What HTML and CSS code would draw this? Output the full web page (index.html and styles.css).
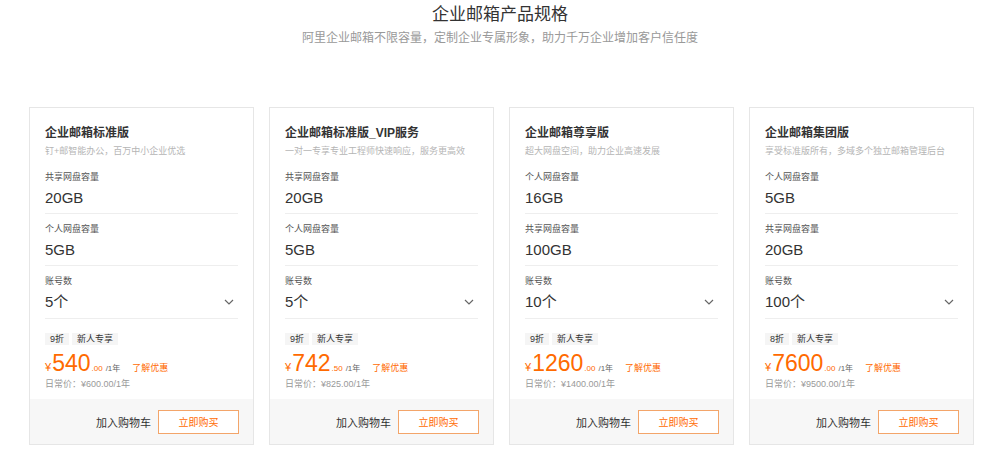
FILE: index.html
```html
<!DOCTYPE html>
<html lang="zh-CN">
<head>
<meta charset="utf-8">
<title>企业邮箱产品规格</title>
<link rel="stylesheet" href="styles.css">
</head>
<body>
<header class="head">
  <h1 class="head-title">企业邮箱产品规格</h1>
  <p class="head-sub">阿里企业邮箱不限容量，定制企业专属形象，助力千万企业增加客户信任度</p>
</header>
<main class="cards">
  <section class="card">
    <div class="card-body">
      <h2 class="card-title">企业邮箱标准版</h2>
      <p class="card-desc">钉+邮智能办公，百万中小企业优选</p>
      <div class="spec"><div class="spec-label">共享网盘容量</div><div class="spec-value">20GB</div></div>
      <div class="spec"><div class="spec-label">个人网盘容量</div><div class="spec-value">5GB</div></div>
      <div class="spec spec-select"><div class="spec-label">账号数</div><div class="spec-row"><span class="spec-value">5个</span><svg class="chev" viewBox="0 0 10 6" width="10" height="6"><path d="M1 1l4 4 4-4" fill="none" stroke="#666" stroke-width="1.2"/></svg></div></div>
      <div class="tags"><span class="tag">9折</span><span class="tag">新人专享</span></div>
      <div class="price"><span class="yen">¥</span><span class="num">540</span><span class="dec">.00</span><span class="unit">/1年</span><a class="promo">了解优惠</a></div>
      <div class="orig">日常价：¥600.00/1年</div>
    </div>
    <div class="card-foot"><span class="cart">加入购物车</span><button class="buy">立即购买</button></div>
  </section>
  <section class="card">
    <div class="card-body">
      <h2 class="card-title">企业邮箱标准版_VIP服务</h2>
      <p class="card-desc">一对一专享专业工程师快速响应，服务更高效</p>
      <div class="spec"><div class="spec-label">共享网盘容量</div><div class="spec-value">20GB</div></div>
      <div class="spec"><div class="spec-label">个人网盘容量</div><div class="spec-value">5GB</div></div>
      <div class="spec spec-select"><div class="spec-label">账号数</div><div class="spec-row"><span class="spec-value">5个</span><svg class="chev" viewBox="0 0 10 6" width="10" height="6"><path d="M1 1l4 4 4-4" fill="none" stroke="#666" stroke-width="1.2"/></svg></div></div>
      <div class="tags"><span class="tag">9折</span><span class="tag">新人专享</span></div>
      <div class="price"><span class="yen">¥</span><span class="num">742</span><span class="dec">.50</span><span class="unit">/1年</span><a class="promo">了解优惠</a></div>
      <div class="orig">日常价：¥825.00/1年</div>
    </div>
    <div class="card-foot"><span class="cart">加入购物车</span><button class="buy">立即购买</button></div>
  </section>
  <section class="card">
    <div class="card-body">
      <h2 class="card-title">企业邮箱尊享版</h2>
      <p class="card-desc">超大网盘空间，助力企业高速发展</p>
      <div class="spec"><div class="spec-label">个人网盘容量</div><div class="spec-value">16GB</div></div>
      <div class="spec"><div class="spec-label">共享网盘容量</div><div class="spec-value">100GB</div></div>
      <div class="spec spec-select"><div class="spec-label">账号数</div><div class="spec-row"><span class="spec-value">10个</span><svg class="chev" viewBox="0 0 10 6" width="10" height="6"><path d="M1 1l4 4 4-4" fill="none" stroke="#666" stroke-width="1.2"/></svg></div></div>
      <div class="tags"><span class="tag">9折</span><span class="tag">新人专享</span></div>
      <div class="price"><span class="yen">¥</span><span class="num">1260</span><span class="dec">.00</span><span class="unit">/1年</span><a class="promo">了解优惠</a></div>
      <div class="orig">日常价：¥1400.00/1年</div>
    </div>
    <div class="card-foot"><span class="cart">加入购物车</span><button class="buy">立即购买</button></div>
  </section>
  <section class="card">
    <div class="card-body">
      <h2 class="card-title">企业邮箱集团版</h2>
      <p class="card-desc">享受标准版所有，多域多个独立邮箱管理后台</p>
      <div class="spec"><div class="spec-label">个人网盘容量</div><div class="spec-value">5GB</div></div>
      <div class="spec"><div class="spec-label">共享网盘容量</div><div class="spec-value">20GB</div></div>
      <div class="spec spec-select"><div class="spec-label">账号数</div><div class="spec-row"><span class="spec-value">100个</span><svg class="chev" viewBox="0 0 10 6" width="10" height="6"><path d="M1 1l4 4 4-4" fill="none" stroke="#666" stroke-width="1.2"/></svg></div></div>
      <div class="tags"><span class="tag">8折</span><span class="tag">新人专享</span></div>
      <div class="price"><span class="yen">¥</span><span class="num">7600</span><span class="dec">.00</span><span class="unit">/1年</span><a class="promo">了解优惠</a></div>
      <div class="orig">日常价：¥9500.00/1年</div>
    </div>
    <div class="card-foot"><span class="cart">加入购物车</span><button class="buy">立即购买</button></div>
  </section>
</main>
</body>
</html>
```

FILE: styles.css
```css
* { box-sizing: border-box; }
html, body { margin: 0; padding: 0; background: #fff; }
body {
  font-family: "Liberation Sans", "Noto Sans CJK SC", Arial, sans-serif;
  color: #333;
}
.head { text-align: center; padding-top: 4px; }
.head-title {
  margin: 0;
  font-size: 17px;
  line-height: 22px;
  font-weight: normal;
  color: #333;
}
.head-sub {
  margin: 4px 0 0;
  font-size: 12px;
  line-height: 16px;
  color: #999;
}
.cards {
  display: flex;
  gap: 15px;
  margin: 61px 0 0;
  padding-left: 29px;
}
.card {
  width: 225px;
  height: 338px;
  border: 1px solid #e6e6e6;
  display: flex;
  flex-direction: column;
  background: #fff;
}
.card-body { padding: 17px 15px 0; }
.card-title {
  margin: 0;
  font-size: 12px;
  line-height: 16px;
  font-weight: bold;
  color: #333;
}
.card-desc {
  margin: 3px 0 4px;
  font-size: 9px;
  line-height: 14px;
  color: #b5b5b5;
  white-space: nowrap;
}
.spec {
  padding: 9px 0 5px;
  border-bottom: 1px solid #eee;
}
.spec-select { padding-bottom: 6px; }
.spec-label {
  font-size: 9px;
  line-height: 12px;
  color: #555;
  margin-bottom: 5px;
}
.spec-value {
  display: block;
  font-size: 15px;
  line-height: 20px;
  color: #333;
}
.spec-row {
  display: flex;
  align-items: center;
  justify-content: space-between;
  padding-right: 4px;
}
.chev { display: block; }
.tags {
  display: flex;
  gap: 3px;
  margin-top: 14px;
}
.tag {
  background: #f5f5f5;
  font-size: 9px;
  line-height: 12px;
  padding: 0 5px;
  color: #333;
}
.price {
  display: flex;
  align-items: baseline;
  margin-top: 5px;
  height: 26px;
  line-height: 26px;
  color: #ff6a00;
}
.yen { font-size: 11px; margin-right: 1px; }
.num { font-size: 23px; }
.dec { font-size: 8px; margin-left: 1px; }
.unit { font-size: 8px; color: #666; margin-left: 3px; }
.promo {
  font-size: 9px;
  color: #ff6a00;
  margin-left: 12px;
}
.orig {
  margin-top: 2px;
  font-size: 9px;
  line-height: 12px;
  color: #999;
}
.card-foot {
  margin-top: auto;
  height: 45px;
  background: #f7f7f7;
  display: flex;
  align-items: center;
  justify-content: flex-end;
  padding-right: 14px;
  gap: 7px;
}
.cart { font-size: 11px; color: #333; }
.buy {
  width: 81px;
  height: 24px;
  border: 1px solid #f3a56a;
  background: #fff;
  color: #ff6a00;
  font-family: inherit;
  font-size: 10px;
  padding: 0;
}
```
